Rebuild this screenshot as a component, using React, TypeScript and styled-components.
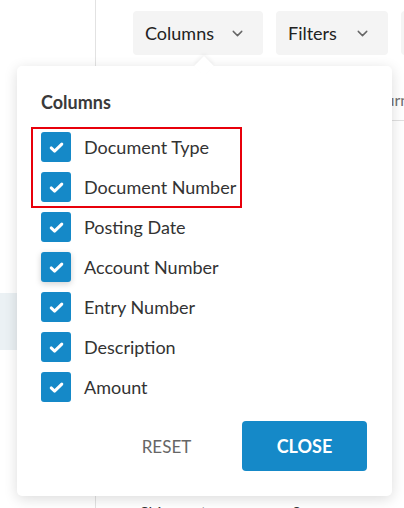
import React from 'react';
import styled, { createGlobalStyle } from 'styled-components';
import { ChevronDown } from 'lucide-react';

const GlobalStyle = createGlobalStyle`
  html, body {
    margin: 0;
    padding: 0;
    background: #fff;
    font-family: Lato, "Open Sans", sans-serif;
  }
  * { box-sizing: border-box; }
`;

const Page = styled.div`
  position: relative;
  display: flex;
  width: 404px;
  height: 508px;
  overflow: hidden;
`;

const Sidebar = styled.nav`
  width: 96px;
  flex-shrink: 0;
  border-right: 1px solid #e2e2e2;
  padding-top: 65px;
`;

const NavItem = styled.div<{ $active?: boolean }>`
  height: 57px;
  background: ${p => (p.$active ? '#ebf1f4' : 'transparent')};
`;

const Main = styled.main`
  flex: 1;
  min-width: 0;
  overflow: hidden;
`;

const Toolbar = styled.div`
  display: flex;
  gap: 13px;
  padding: 11px 0 11px 37px;
  white-space: nowrap;
`;

const ToolButton = styled.button<{ $width: number }>`
  flex-shrink: 0;
  width: ${p => p.$width}px;
  height: 44px;
  display: flex;
  align-items: center;
  justify-content: space-between;
  padding: 0 17px 0 12px;
  border: none;
  border-radius: 4px;
  background: #f4f4f4;
  font-family: Lato, sans-serif;
  font-size: 18px;
  color: #222;
  svg { color: #666; }
`;

const HeaderRow = styled.div`
  display: flex;
  height: 55px;
  align-items: center;
  padding: 12px 0 0 37px;
  border-bottom: 1px solid #e0e0e0;
  white-space: nowrap;
`;

const HeaderCell = styled.div<{ $width?: number }>`
  flex-shrink: 0;
  width: ${p => (p.$width ? `${p.$width}px` : 'auto')};
  font-size: 16px;
  color: #6f6f6f;
`;

const BodyRow = styled.div`
  display: flex;
  height: 60px;
  align-items: center;
  padding-left: 44px;
  font-size: 16px;
  color: #333;
  white-space: nowrap;
`;

const BodyCell = styled.div<{ $width: number }>`
  width: ${p => p.$width}px;
  flex-shrink: 0;
`;

const Popover = styled.div`
  position: absolute;
  left: 17px;
  top: 66px;
  width: 375px;
  height: 430px;
  background: #fff;
  border-radius: 5px;
  box-shadow: 0 3px 14px rgba(0, 0, 0, 0.14);
  padding: 24px 25px 25px 24px;
  display: flex;
  flex-direction: column;

  &::before {
    content: '';
    position: absolute;
    left: 180px;
    top: -7px;
    width: 14px;
    height: 14px;
    background: #fff;
    transform: rotate(45deg);
    box-shadow: -2px -2px 4px rgba(0, 0, 0, 0.05);
  }
`;

const Title = styled.div`
  font-size: 18px;
  line-height: 24px;
  font-weight: 700;
  color: #3a3a3a;
  margin-bottom: 13px;
`;

const List = styled.div`
  position: relative;
  display: flex;
  flex-direction: column;
`;

const Highlight = styled.div`
  position: absolute;
  left: -10px;
  top: 0;
  width: 211px;
  height: 81px;
  border: 2px solid #e8000b;
  pointer-events: none;
`;

const Row = styled.label`
  display: flex;
  align-items: center;
  height: 40px;
  gap: 13px;
  font-size: 18px;
  color: #333;
`;

const Box = styled.span<{ $focused?: boolean }>`
  width: 30px;
  height: 30px;
  border-radius: 3px;
  background: #1589c8;
  display: flex;
  align-items: center;
  justify-content: center;
  box-shadow: ${p => (p.$focused ? '0 2px 6px rgba(0,0,0,0.18)' : 'none')};
`;

const Footer = styled.div`
  margin-top: auto;
  display: flex;
  justify-content: flex-end;
  gap: 13px;
`;

const ActionButton = styled.button<{ $primary?: boolean }>`
  width: 125px;
  height: 50px;
  border: none;
  border-radius: 4px;
  background: ${p => (p.$primary ? '#1589c8' : 'transparent')};
  color: ${p => (p.$primary ? '#fff' : '#666')};
  font-family: Lato, sans-serif;
  font-size: ${p => (p.$primary ? '18px' : '17px')};
  font-weight: ${p => (p.$primary ? 700 : 400)};
  text-transform: uppercase;
`;

const Check = () => (
  <svg width="17" height="17" viewBox="0 0 16 16" fill="none">
    <path d="M3 8.4l3.2 3L13 4.8" stroke="#fff" strokeWidth="2.8" strokeLinecap="round" strokeLinejoin="round" />
  </svg>
);

const columns = [
  'Document Type',
  'Document Number',
  'Posting Date',
  'Account Number',
  'Entry Number',
  'Description',
  'Amount',
];

export default function App() {
  return (
    <>
      <GlobalStyle />
      <Page>
        <Sidebar>
          <NavItem />
          <NavItem />
          <NavItem />
          <NavItem />
          <NavItem $active />
        </Sidebar>
        <Main>
          <Toolbar>
            <ToolButton $width={130}>
              Columns <ChevronDown size={17} strokeWidth={2} />
            </ToolButton>
            <ToolButton $width={112}>
              Filters <ChevronDown size={17} strokeWidth={2} />
            </ToolButton>
            <ToolButton $width={112}>Export</ToolButton>
          </Toolbar>
          <HeaderRow>
            <HeaderCell $width={122}>Type</HeaderCell>
            <HeaderCell $width={115}>Number</HeaderCell>
            <HeaderCell>Journal</HeaderCell>
          </HeaderRow>
          {[0, 1, 2, 3, 4, 5].map(i => (
            <BodyRow key={i}>
              <BodyCell $width={152}>Invoice</BodyCell>
              <BodyCell $width={100}>{1000 + i}</BodyCell>
            </BodyRow>
          ))}
          <BodyRow>
            <BodyCell $width={152}>Shipment</BodyCell>
            <BodyCell $width={100}>0</BodyCell>
          </BodyRow>
        </Main>
        <Popover>
          <Title>Columns</Title>
          <List>
            <Highlight />
            {columns.map(c => (
              <Row key={c}>
                <Box $focused={c === 'Account Number'}>
                  <Check />
                </Box>
                {c}
              </Row>
            ))}
          </List>
          <Footer>
            <ActionButton>Reset</ActionButton>
            <ActionButton $primary>Close</ActionButton>
          </Footer>
        </Popover>
      </Page>
    </>
  );
}
